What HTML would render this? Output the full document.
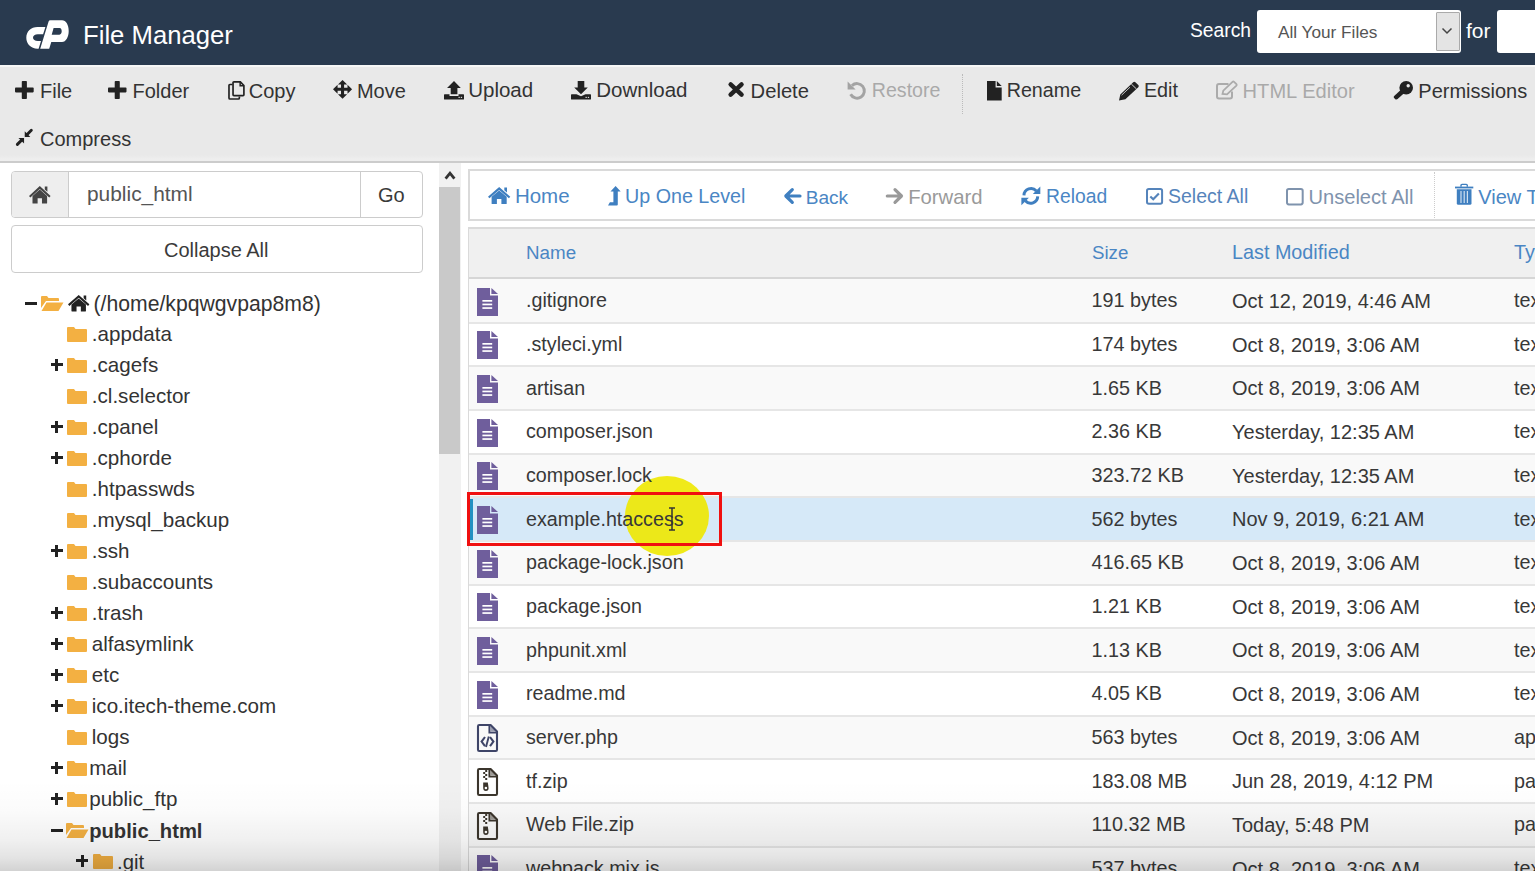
<!DOCTYPE html><html><head><meta charset="utf-8"><title>File Manager</title><style>
*{margin:0;padding:0;box-sizing:border-box}
html,body{width:1535px;height:871px;overflow:hidden;background:#fff;font-family:"Liberation Sans",sans-serif}
.t{position:absolute;white-space:nowrap;line-height:1}
.a{position:absolute}
svg{position:absolute;overflow:visible}
</style></head><body>
<div class="a" style="left:0;top:0;width:1535px;height:65px;background:#293a4f"></div>
<div class="a" style="left:0;top:65px;width:1535px;height:2px;background:#f6f6f6"></div>
<svg style="left:20px;top:14px" width="56" height="42" viewBox="20 14 56 42"><path d="M45.4 27 L37.5 27 C31 27 26.3 31.5 26.3 37.8 C26.3 44 31 48.7 37.5 48.7 L38.6 48.7 L41.0 41 L37.8 41 C35 41 33 39.6 33 37.7 C33 35.8 35 34.3 37.8 34.3 L43.1 34.3 Z" fill="#fff"/><path fill-rule="evenodd" d="M40.2 48.7 L48.6 21.6 Q49 20.3 50.3 20.3 L62 20.3 C66 20.3 68.7 25 68.7 31 C68.7 37 66 42 62 42 L51.3 42 L49.2 48.7 Z M53.6 28 L59.6 28 C61.1 28 61.7 29.6 61.7 31.3 C61.7 33 60.9 34.7 59.4 34.7 L51.7 34.7 Z" fill="#fff"/></svg>
<div class="t" style="left:83.0px;top:23.04px;font-size:25.7px;color:#fff;font-weight:normal;">File Manager</div>
<div class="t" style="left:1190.0px;top:21.26px;font-size:19.3px;color:#fff;font-weight:normal;">Search</div>
<div class="a" style="left:1257px;top:10px;width:204px;height:43px;background:#fff;border-radius:3px;"></div>
<div class="a" style="left:1435.5px;top:11.5px;width:24px;height:39.5px;background:#e4e4e4;border:1px solid #aaa;border-radius:1px"></div>
<svg style="left:1441px;top:27px" width="12" height="8" viewBox="0 0 12 8"><path d="M1.5 1.5 L6 6 L10.5 1.5" stroke="#444" stroke-width="1.5" fill="none"/></svg>
<div class="t" style="left:1278.0px;top:23.94px;font-size:17.2px;color:#555;font-weight:normal;">All Your Files</div>
<div class="t" style="left:1466.0px;top:19.82px;font-size:21px;color:#fff;font-weight:normal;">for</div>
<div class="a" style="left:1497px;top:10px;width:60px;height:43px;background:#fff;border-radius:3px;"></div>
<div class="a" style="left:0;top:67px;width:1535px;height:94px;background:linear-gradient(to bottom,#e9e9e9 0,#e9e9e9 88px,#eeeeee 92px)"></div>
<div class="a" style="left:0;top:161px;width:1535px;height:2px;background:#cccccc"></div>
<div class="t" style="left:40.0px;top:80.67px;font-size:20px;color:#333;font-weight:normal;">File</div>
<div class="t" style="left:132.5px;top:80.67px;font-size:20px;color:#333;font-weight:normal;">Folder</div>
<div class="t" style="left:248.8px;top:80.67px;font-size:20px;color:#333;font-weight:normal;">Copy</div>
<div class="t" style="left:356.9px;top:80.67px;font-size:20px;color:#333;font-weight:normal;">Move</div>
<div class="t" style="left:468.2px;top:80.24px;font-size:20.5px;color:#333;font-weight:normal;">Upload</div>
<div class="t" style="left:596.3px;top:80.24px;font-size:20.5px;color:#333;font-weight:normal;">Download</div>
<div class="t" style="left:750.6px;top:80.50px;font-size:20.2px;color:#333;font-weight:normal;">Delete</div>
<div class="t" style="left:871.8px;top:81.00px;font-size:19.6px;color:#a9a9a9;font-weight:normal;">Restore</div>
<div class="t" style="left:1006.7px;top:80.92px;font-size:19.7px;color:#333;font-weight:normal;">Rename</div>
<div class="t" style="left:1143.9px;top:80.84px;font-size:19.8px;color:#333;font-weight:normal;">Edit</div>
<div class="t" style="left:1242.6px;top:80.58px;font-size:20.1px;color:#a9a9a9;font-weight:normal;">HTML Editor</div>
<div class="t" style="left:1418.3px;top:80.67px;font-size:20px;color:#333;font-weight:normal;">Permissions</div>
<div class="t" style="left:40.0px;top:128.77px;font-size:20px;color:#333;font-weight:normal;">Compress</div>
<svg style="left:15.00px;top:81.00px" width="18.70" height="18.00" viewBox="0 0 19 18" preserveAspectRatio="none"><rect x="0" y="6.6" width="19" height="4.8" rx="0.8" fill="#222"/><rect x="6.9" y="0" width="5.2" height="18" rx="0.8" fill="#222"/></svg>
<svg style="left:107.50px;top:81.00px" width="18.50" height="18.00" viewBox="0 0 19 18" preserveAspectRatio="none"><rect x="0" y="6.6" width="19" height="4.8" rx="0.8" fill="#222"/><rect x="6.9" y="0" width="5.2" height="18" rx="0.8" fill="#222"/></svg>
<svg style="left:227.80px;top:81.00px" width="16.80" height="19.00" viewBox="0 0 17 19" preserveAspectRatio="none"><path d="M4.5 3.5 H2 Q1 3.5 1 4.5 V17 Q1 18 2 18 H10.5 Q11.5 18 11.5 17 V15.5" stroke="#222" stroke-width="1.7" fill="none"/><path d="M6 0.9 H12.5 L16.1 4.5 V13.8 Q16.1 14.7 15.2 14.7 H6 Q5.1 14.7 5.1 13.8 V1.8 Q5.1 0.9 6 0.9 Z" stroke="#222" stroke-width="1.7" fill="none"/><path d="M12.3 1 V4.7 H16" stroke="#222" stroke-width="1.5" fill="none"/></svg>
<svg style="left:332.70px;top:80.00px" width="19.10" height="18.70" viewBox="0 0 20 20" preserveAspectRatio="none"><path d="M10 0 L14.8 4.8 H11.6 V8.4 H15.2 V5.2 L20 10 L15.2 14.8 V11.6 H11.6 V15.2 H14.8 L10 20 L5.2 15.2 H8.4 V11.6 H4.8 V14.8 L0 10 L4.8 5.2 V8.4 H8.4 V4.8 H5.2 Z" fill="#222"/></svg>
<svg style="left:444.00px;top:81.00px" width="20.00" height="18.80" viewBox="0 0 20 19" preserveAspectRatio="none"><path d="M10 0 L16.8 7.2 H13.4 V13.3 H6.7 V7.2 H3 Z" fill="#222"/><path d="M0 14 Q0 13.3 0.7 13.3 H5.5 V15.2 H14.5 V13.3 H19.3 Q20 13.3 20 14 V18.2 Q20 18.8 19.3 18.8 H0.7 Q0 18.8 0 18.2 Z" fill="#222"/><rect x="14.5" y="16" width="1.3" height="1.1" fill="#e9e9e9"/><rect x="16.8" y="16" width="1.3" height="1.1" fill="#e9e9e9"/></svg>
<svg style="left:571.40px;top:81.00px" width="20.00" height="18.80" viewBox="0 0 20 19" preserveAspectRatio="none"><path d="M6.7 0 H13.3 V6.6 H16.8 L10 13.3 L3.2 6.6 H6.7 Z" fill="#222"/><path d="M0 14 Q0 13.3 0.7 13.3 H5.5 L10 15.5 L14.5 13.3 H19.3 Q20 13.3 20 14 V18.2 Q20 18.8 19.3 18.8 H0.7 Q0 18.8 0 18.2 Z" fill="#222"/><rect x="14.5" y="16" width="1.3" height="1.1" fill="#e9e9e9"/><rect x="16.8" y="16" width="1.3" height="1.1" fill="#e9e9e9"/></svg>
<svg style="left:728.30px;top:82.30px" width="16.20" height="15.10" viewBox="0 0 16 15" preserveAspectRatio="none"><path d="M2.6 2.4 L13.4 12.6 M13.4 2.4 L2.6 12.6" stroke="#222" stroke-width="4.4" stroke-linecap="round"/></svg>
<svg style="left:846.70px;top:80.70px" width="19.30" height="18.80" viewBox="0 0 19.3 18.8" preserveAspectRatio="none"><path d="M5 4.6 A7.3 7.3 0 1 1 3.6 13.3" stroke="#a3a3a3" stroke-width="2.9" fill="none"/><path d="M0.6 0.6 L0.6 8.6 L8.6 8.6 Z" fill="#a3a3a3"/></svg>
<svg style="left:987.30px;top:80.80px" width="14.70" height="19.40" viewBox="0 0 14.7 19.4" preserveAspectRatio="none"><path d="M0 0 H8.6 V6.4 H14.7 V19.4 H0 Z" fill="#222"/><path d="M9.8 0 L14.7 5 H9.8 Z" fill="#222"/></svg>
<svg style="left:1119.20px;top:80.80px" width="20.50" height="19.40" viewBox="0 0 20.5 19.4" preserveAspectRatio="none"><path d="M0 19.4 L1.3 13.6 L14.2 1.2 Q15.3 0.1 16.4 1.2 L19.3 4 Q20.4 5.1 19.3 6.2 L6.4 18.3 Z" fill="#222"/><path d="M12.3 3 L17.5 8" stroke="#e9e9e9" stroke-width="0.9"/><path d="M2.6 14.2 L11 6.2" stroke="#e9e9e9" stroke-width="0.8"/></svg>
<svg style="left:1215.70px;top:81.00px" width="22.30" height="18.60" viewBox="0 0 22.3 18.6" preserveAspectRatio="none"><path d="M12.5 3 H3 Q1 3 1 5 V15.6 Q1 17.6 3 17.6 H14 Q16 17.6 16 15.6 V10.5" stroke="#ababab" stroke-width="2" fill="none"/><path d="M6.5 13 L7.3 9.6 L16.5 0.9 Q17.3 0.2 18.1 0.9 L20.4 3.1 Q21.1 3.9 20.4 4.6 L11 13.3 Z" stroke="#ababab" stroke-width="1.8" fill="none"/></svg>
<svg style="left:1392.80px;top:81.00px" width="20.00" height="18.60" viewBox="0 0 20 18.6" preserveAspectRatio="none"><circle cx="13.2" cy="6.8" r="6.8" fill="#222"/><circle cx="15.2" cy="4.8" r="1.7" fill="#e9e9e9"/><path d="M8.2 8.4 L11.6 11.8 L4.6 18.1 Q3.7 18.9 2.6 18.4 L0.9 16.7 Q0.4 15.7 1.2 14.9 Z" fill="#222"/></svg>
<svg style="left:16.20px;top:128.60px" width="16.70" height="16.80" viewBox="0 0 17 17" preserveAspectRatio="none"><path d="M15.6 1.3 L10.6 6.3" stroke="#222" stroke-width="3" stroke-linecap="round"/><path d="M1.4 15.6 L6.4 10.6" stroke="#222" stroke-width="3" stroke-linecap="round"/><path d="M8.9 2.3 V8 H14.6 Z" fill="#222"/><path d="M8.2 9 H2.5 L8.2 14.7 Z" fill="#222"/></svg>
<div class="a" style="left:962px;top:74px;width:0;height:40px;border-left:1px dotted #bbb"></div>
<div class="a" style="left:11px;top:171px;width:412px;height:47px;border:1px solid #ccc;border-radius:4px;background:#fff"></div>
<div class="a" style="left:12px;top:172px;width:57px;height:45px;background:#eee;border-right:1px solid #ccc;border-radius:3px 0 0 3px"></div>
<div class="a" style="left:360px;top:172px;width:1px;height:45px;background:#ccc"></div>
<div class="t" style="left:87.0px;top:184.30px;font-size:20.9px;color:#555;font-weight:normal;">public_html</div>
<svg style="left:29.40px;top:185.50px" width="21.60" height="17.50" viewBox="0 0 22.3 17.1" preserveAspectRatio="none"><path d="M11.15 0 L22.3 9.7 L20.9 11.3 L11.15 2.9 L1.4 11.3 L0 9.7 Z" fill="#444"/><path d="M16.3 0.6 H19 V5.6 L16.3 3.3 Z" fill="#444"/><path d="M3.6 9.8 L11.15 3.5 L18.7 9.8 V16.6 Q18.7 17.1 18.2 17.1 H13.4 V12 H8.9 V17.1 H4.1 Q3.6 17.1 3.6 16.6 Z" fill="#444"/></svg>
<div class="t" style="left:378.0px;top:185.07px;font-size:20px;color:#3a3a3a;font-weight:normal;">Go</div>
<div class="a" style="left:11px;top:225px;width:412px;height:48px;border:1px solid #ccc;border-radius:4px;background:#fff"></div>
<div class="t" style="left:164.0px;top:240.47px;font-size:20px;color:#3a3a3a;font-weight:normal;">Collapse All</div>
<div class="a" style="left:25px;top:301.5px;width:12px;height:3px;background:#222"></div>
<svg style="left:41px;top:296px" width="23" height="15" viewBox="0 0 23 15"><path d="M0 1 Q0 0 1 0 H6 L7.5 2 H17 Q18 2 18 3 V5 H5 L0 12 Z" fill="#f3b042"/><path d="M5.5 6.5 H22.5 L17.5 15 H0.5 Z" fill="#f3b042"/></svg>
<svg style="left:67.50px;top:295.20px" width="21.40" height="16.50" viewBox="0 0 22.3 17.1" preserveAspectRatio="none"><path d="M11.15 0 L22.3 9.7 L20.9 11.3 L11.15 2.9 L1.4 11.3 L0 9.7 Z" fill="#222"/><path d="M16.3 0.6 H19 V5.6 L16.3 3.3 Z" fill="#222"/><path d="M3.6 9.8 L11.15 3.5 L18.7 9.8 V16.6 Q18.7 17.1 18.2 17.1 H13.4 V12 H8.9 V17.1 H4.1 Q3.6 17.1 3.6 16.6 Z" fill="#222"/></svg>
<div class="t" style="left:93.5px;top:292.95px;font-size:21.2px;color:#333;font-weight:normal;">(/home/kpqwgvpap8m8)</div>
<svg style="left:67px;top:327px" width="20" height="15" viewBox="0 0 20 15"><path d="M0 1 Q0 0 1 0 H7 L8.5 2 H19 Q20 2 20 3 V14 Q20 15 19 15 H1 Q0 15 0 14 Z" fill="#f3b042"/></svg>
<div class="t" style="left:91.8px;top:324.46px;font-size:20.6px;color:#333;font-weight:normal;">.appdata</div>
<div class="a" style="left:50.5px;top:363.0px;width:12px;height:3px;background:#222"></div><div class="a" style="left:55.0px;top:358.5px;width:3px;height:12px;background:#222"></div>
<svg style="left:67px;top:358px" width="20" height="15" viewBox="0 0 20 15"><path d="M0 1 Q0 0 1 0 H7 L8.5 2 H19 Q20 2 20 3 V14 Q20 15 19 15 H1 Q0 15 0 14 Z" fill="#f3b042"/></svg>
<div class="t" style="left:91.8px;top:355.46px;font-size:20.6px;color:#333;font-weight:normal;">.cagefs</div>
<svg style="left:67px;top:389px" width="20" height="15" viewBox="0 0 20 15"><path d="M0 1 Q0 0 1 0 H7 L8.5 2 H19 Q20 2 20 3 V14 Q20 15 19 15 H1 Q0 15 0 14 Z" fill="#f3b042"/></svg>
<div class="t" style="left:91.8px;top:386.46px;font-size:20.6px;color:#333;font-weight:normal;">.cl.selector</div>
<div class="a" style="left:50.5px;top:425.0px;width:12px;height:3px;background:#222"></div><div class="a" style="left:55.0px;top:420.5px;width:3px;height:12px;background:#222"></div>
<svg style="left:67px;top:420px" width="20" height="15" viewBox="0 0 20 15"><path d="M0 1 Q0 0 1 0 H7 L8.5 2 H19 Q20 2 20 3 V14 Q20 15 19 15 H1 Q0 15 0 14 Z" fill="#f3b042"/></svg>
<div class="t" style="left:91.8px;top:417.46px;font-size:20.6px;color:#333;font-weight:normal;">.cpanel</div>
<div class="a" style="left:50.5px;top:456.0px;width:12px;height:3px;background:#222"></div><div class="a" style="left:55.0px;top:451.5px;width:3px;height:12px;background:#222"></div>
<svg style="left:67px;top:451px" width="20" height="15" viewBox="0 0 20 15"><path d="M0 1 Q0 0 1 0 H7 L8.5 2 H19 Q20 2 20 3 V14 Q20 15 19 15 H1 Q0 15 0 14 Z" fill="#f3b042"/></svg>
<div class="t" style="left:91.8px;top:448.46px;font-size:20.6px;color:#333;font-weight:normal;">.cphorde</div>
<svg style="left:67px;top:482px" width="20" height="15" viewBox="0 0 20 15"><path d="M0 1 Q0 0 1 0 H7 L8.5 2 H19 Q20 2 20 3 V14 Q20 15 19 15 H1 Q0 15 0 14 Z" fill="#f3b042"/></svg>
<div class="t" style="left:91.8px;top:479.46px;font-size:20.6px;color:#333;font-weight:normal;">.htpasswds</div>
<svg style="left:67px;top:513px" width="20" height="15" viewBox="0 0 20 15"><path d="M0 1 Q0 0 1 0 H7 L8.5 2 H19 Q20 2 20 3 V14 Q20 15 19 15 H1 Q0 15 0 14 Z" fill="#f3b042"/></svg>
<div class="t" style="left:91.8px;top:510.46px;font-size:20.6px;color:#333;font-weight:normal;">.mysql_backup</div>
<div class="a" style="left:50.5px;top:549.0px;width:12px;height:3px;background:#222"></div><div class="a" style="left:55.0px;top:544.5px;width:3px;height:12px;background:#222"></div>
<svg style="left:67px;top:544px" width="20" height="15" viewBox="0 0 20 15"><path d="M0 1 Q0 0 1 0 H7 L8.5 2 H19 Q20 2 20 3 V14 Q20 15 19 15 H1 Q0 15 0 14 Z" fill="#f3b042"/></svg>
<div class="t" style="left:91.8px;top:541.46px;font-size:20.6px;color:#333;font-weight:normal;">.ssh</div>
<svg style="left:67px;top:575px" width="20" height="15" viewBox="0 0 20 15"><path d="M0 1 Q0 0 1 0 H7 L8.5 2 H19 Q20 2 20 3 V14 Q20 15 19 15 H1 Q0 15 0 14 Z" fill="#f3b042"/></svg>
<div class="t" style="left:91.8px;top:572.46px;font-size:20.6px;color:#333;font-weight:normal;">.subaccounts</div>
<div class="a" style="left:50.5px;top:611.0px;width:12px;height:3px;background:#222"></div><div class="a" style="left:55.0px;top:606.5px;width:3px;height:12px;background:#222"></div>
<svg style="left:67px;top:606px" width="20" height="15" viewBox="0 0 20 15"><path d="M0 1 Q0 0 1 0 H7 L8.5 2 H19 Q20 2 20 3 V14 Q20 15 19 15 H1 Q0 15 0 14 Z" fill="#f3b042"/></svg>
<div class="t" style="left:91.8px;top:603.46px;font-size:20.6px;color:#333;font-weight:normal;">.trash</div>
<div class="a" style="left:50.5px;top:642.0px;width:12px;height:3px;background:#222"></div><div class="a" style="left:55.0px;top:637.5px;width:3px;height:12px;background:#222"></div>
<svg style="left:67px;top:637px" width="20" height="15" viewBox="0 0 20 15"><path d="M0 1 Q0 0 1 0 H7 L8.5 2 H19 Q20 2 20 3 V14 Q20 15 19 15 H1 Q0 15 0 14 Z" fill="#f3b042"/></svg>
<div class="t" style="left:91.8px;top:634.46px;font-size:20.6px;color:#333;font-weight:normal;">alfasymlink</div>
<div class="a" style="left:50.5px;top:673.0px;width:12px;height:3px;background:#222"></div><div class="a" style="left:55.0px;top:668.5px;width:3px;height:12px;background:#222"></div>
<svg style="left:67px;top:668px" width="20" height="15" viewBox="0 0 20 15"><path d="M0 1 Q0 0 1 0 H7 L8.5 2 H19 Q20 2 20 3 V14 Q20 15 19 15 H1 Q0 15 0 14 Z" fill="#f3b042"/></svg>
<div class="t" style="left:91.8px;top:665.46px;font-size:20.6px;color:#333;font-weight:normal;">etc</div>
<div class="a" style="left:50.5px;top:704.0px;width:12px;height:3px;background:#222"></div><div class="a" style="left:55.0px;top:699.5px;width:3px;height:12px;background:#222"></div>
<svg style="left:67px;top:699px" width="20" height="15" viewBox="0 0 20 15"><path d="M0 1 Q0 0 1 0 H7 L8.5 2 H19 Q20 2 20 3 V14 Q20 15 19 15 H1 Q0 15 0 14 Z" fill="#f3b042"/></svg>
<div class="t" style="left:91.8px;top:696.46px;font-size:20.6px;color:#333;font-weight:normal;">ico.itech-theme.com</div>
<svg style="left:67px;top:730px" width="20" height="15" viewBox="0 0 20 15"><path d="M0 1 Q0 0 1 0 H7 L8.5 2 H19 Q20 2 20 3 V14 Q20 15 19 15 H1 Q0 15 0 14 Z" fill="#f3b042"/></svg>
<div class="t" style="left:91.8px;top:727.46px;font-size:20.6px;color:#333;font-weight:normal;">logs</div>
<div class="a" style="left:50.5px;top:766.0px;width:12px;height:3px;background:#222"></div><div class="a" style="left:55.0px;top:761.5px;width:3px;height:12px;background:#222"></div>
<svg style="left:67px;top:761px" width="20" height="15" viewBox="0 0 20 15"><path d="M0 1 Q0 0 1 0 H7 L8.5 2 H19 Q20 2 20 3 V14 Q20 15 19 15 H1 Q0 15 0 14 Z" fill="#f3b042"/></svg>
<div class="t" style="left:89.2px;top:758.46px;font-size:20.6px;color:#333;font-weight:normal;">mail</div>
<div class="a" style="left:50.5px;top:797.0px;width:12px;height:3px;background:#222"></div><div class="a" style="left:55.0px;top:792.5px;width:3px;height:12px;background:#222"></div>
<svg style="left:67px;top:792px" width="20" height="15" viewBox="0 0 20 15"><path d="M0 1 Q0 0 1 0 H7 L8.5 2 H19 Q20 2 20 3 V14 Q20 15 19 15 H1 Q0 15 0 14 Z" fill="#f3b042"/></svg>
<div class="t" style="left:89.2px;top:789.46px;font-size:20.6px;color:#333;font-weight:normal;">public_ftp</div>
<div class="a" style="left:50.5px;top:828.5px;width:12px;height:3px;background:#222"></div>
<svg style="left:66px;top:823px" width="23" height="15" viewBox="0 0 23 15"><path d="M0 1 Q0 0 1 0 H6 L7.5 2 H17 Q18 2 18 3 V5 H5 L0 12 Z" fill="#f3b042"/><path d="M5.5 6.5 H22.5 L17.5 15 H0.5 Z" fill="#f3b042"/></svg>
<div class="t" style="left:89.2px;top:820.80px;font-size:20.2px;color:#333;font-weight:bold;">public_html</div>
<div class="a" style="left:76px;top:859.0px;width:12px;height:3px;background:#222"></div><div class="a" style="left:80.5px;top:854.5px;width:3px;height:12px;background:#222"></div>
<svg style="left:92.5px;top:854px" width="20" height="15" viewBox="0 0 20 15"><path d="M0 1 Q0 0 1 0 H7 L8.5 2 H19 Q20 2 20 3 V14 Q20 15 19 15 H1 Q0 15 0 14 Z" fill="#f3b042"/></svg>
<div class="t" style="left:117.0px;top:851.71px;font-size:20.3px;color:#333;font-weight:normal;">.git</div>
<div class="a" style="left:439px;top:163px;width:22px;height:708px;background:#f1f1f1"></div>
<svg style="left:444px;top:170px" width="12" height="10" viewBox="0 0 12 10"><path d="M1.6 8.6 L6 3.2 L10.4 8.6" stroke="#333" stroke-width="2.8" fill="none"/></svg>
<div class="a" style="left:439px;top:187px;width:21px;height:267px;background:#c9c9c9"></div>
<div class="a" style="left:468px;top:169px;width:1100px;height:52px;border:2px solid #dadada;background:#fff"></div>
<div class="t" style="left:514.9px;top:186.44px;font-size:20.5px;color:#4a86c4;font-weight:normal;">Home</div>
<div class="t" style="left:625.0px;top:187.12px;font-size:19.7px;color:#4a86c4;font-weight:normal;">Up One Level</div>
<div class="t" style="left:805.7px;top:187.63px;font-size:19.1px;color:#4a86c4;font-weight:normal;">Back</div>
<div class="t" style="left:908.2px;top:186.61px;font-size:20.3px;color:#9a9a9a;font-weight:normal;">Forward</div>
<div class="t" style="left:1046.0px;top:187.46px;font-size:19.3px;color:#4a86c4;font-weight:normal;">Reload</div>
<div class="t" style="left:1168.0px;top:187.29px;font-size:19.5px;color:#5584bb;font-weight:normal;">Select All</div>
<div class="t" style="left:1308.5px;top:186.78px;font-size:20.1px;color:#7f93ad;font-weight:normal;">Unselect All</div>
<div class="t" style="left:1478.3px;top:186.87px;font-size:20px;color:#4a86c4;font-weight:normal;">View Trash</div>
<div class="a" style="left:1434px;top:172px;width:0;height:46px;border-left:1px dotted #ccc"></div>
<svg style="left:488.00px;top:187.30px" width="22.30" height="17.10" viewBox="0 0 22.3 17.1" preserveAspectRatio="none"><path d="M11.15 0 L22.3 9.7 L20.9 11.3 L11.15 2.9 L1.4 11.3 L0 9.7 Z" fill="#3f7fc0"/><path d="M16.3 0.6 H19 V5.6 L16.3 3.3 Z" fill="#3f7fc0"/><path d="M3.6 9.8 L11.15 3.5 L18.7 9.8 V16.6 Q18.7 17.1 18.2 17.1 H13.4 V12 H8.9 V17.1 H4.1 Q3.6 17.1 3.6 16.6 Z" fill="#3f7fc0"/></svg>
<svg style="left:607.60px;top:186.40px" width="12.70" height="19.50" viewBox="0 0 12.7 19.5" preserveAspectRatio="none"><path d="M7.6 0 L12.7 5.6 H9.8 V18.5 Q9.8 19.5 8.8 19.5 H0 L1.9 16.3 H5.4 V5.6 H2.5 Z" fill="#3f7fc0"/></svg>
<svg style="left:783.70px;top:188.20px" width="17.30" height="16.00" viewBox="0 0 17.3 16" preserveAspectRatio="none"><path d="M8.3 1.6 L1.8 8 L8.3 14.4 M2.2 8 H16" stroke="#3f7fc0" stroke-width="3.2" stroke-linecap="round" stroke-linejoin="round" fill="none"/></svg>
<svg style="left:886.30px;top:188.20px" width="17.30" height="16.00" viewBox="0 0 17.3 16" preserveAspectRatio="none"><path d="M9 1.6 L15.5 8 L9 14.4 M15.1 8 H1.3" stroke="#999" stroke-width="3.2" stroke-linecap="round" stroke-linejoin="round" fill="none"/></svg>
<svg style="left:1021.30px;top:186.30px" width="19.70" height="19.80" viewBox="0 0 20 20" preserveAspectRatio="none"><path d="M3 9.5 A7.2 7.2 0 0 1 15.6 5" stroke="#3f7fc0" stroke-width="3" fill="none"/><path d="M19.6 0.6 V8.2 H12 Z" fill="#3f7fc0"/><path d="M17 10.5 A7.2 7.2 0 0 1 4.4 15" stroke="#3f7fc0" stroke-width="3" fill="none"/><path d="M0.4 19.4 V11.8 H8 Z" fill="#3f7fc0"/></svg>
<svg style="left:1145.90px;top:187.80px" width="17.10" height="16.70" viewBox="0 0 17 17" preserveAspectRatio="none"><rect x="1" y="1" width="15" height="15" rx="1.8" stroke="#5584bb" stroke-width="2" fill="none"/><path d="M4.3 8.6 L7.2 11.4 L12.8 5.6" stroke="#5584bb" stroke-width="2.1" fill="none"/></svg>
<svg style="left:1286.30px;top:187.50px" width="17.70" height="17.40" viewBox="0 0 17.7 17.4" preserveAspectRatio="none"><rect x="1" y="1" width="15.7" height="15.4" rx="1.8" stroke="#7f93ad" stroke-width="2" fill="none"/></svg>
<svg style="left:1455.20px;top:184.10px" width="18.30" height="20.80" viewBox="0 0 18.3 20.8" preserveAspectRatio="none"><rect x="0" y="2.6" width="18.3" height="1.8" fill="#3f7fc0"/><path d="M6 2.8 V1.4 Q6 0.4 7 0.4 H11.3 Q12.3 0.4 12.3 1.4 V2.8" stroke="#3f7fc0" stroke-width="1.4" fill="none"/><path d="M1.8 5.2 H16.5 V19.3 Q16.5 20.8 15 20.8 H3.3 Q1.8 20.8 1.8 19.3 Z" fill="#3f7fc0"/><rect x="5.4" y="7" width="1.2" height="12" fill="#cfe0f0"/><rect x="8.6" y="7" width="1.2" height="12" fill="#cfe0f0"/><rect x="11.8" y="7" width="1.2" height="12" fill="#cfe0f0"/></svg>
<div class="a" style="left:468px;top:227px;width:1100px;height:660px;border:2px solid #dadada;background:#fff"></div>
<div class="a" style="left:469px;top:229px;width:1100px;height:48px;background:#f0f0f0"></div>
<div class="a" style="left:469px;top:277px;width:1100px;height:2px;background:#d6d6d6"></div>
<div class="t" style="left:526.0px;top:243.88px;font-size:18.8px;color:#4a86c4;font-weight:normal;">Name</div>
<div class="t" style="left:1092.0px;top:243.97px;font-size:18.7px;color:#4a86c4;font-weight:normal;">Size</div>
<div class="t" style="left:1232.0px;top:243.04px;font-size:19.8px;color:#4a86c4;font-weight:normal;">Last Modified</div>
<div class="t" style="left:1514.0px;top:243.04px;font-size:19.8px;color:#4a86c4;font-weight:normal;">Type</div>
<div class="a" style="left:469px;top:279.00px;width:1100px;height:43.67px;background:#f9f9f9"></div>
<div class="a" style="left:469px;top:322.67px;width:1100px;height:43.67px;background:#ffffff"></div>
<div class="a" style="left:469px;top:366.34px;width:1100px;height:43.67px;background:#f9f9f9"></div>
<div class="a" style="left:469px;top:410.01px;width:1100px;height:43.67px;background:#ffffff"></div>
<div class="a" style="left:469px;top:453.68px;width:1100px;height:43.67px;background:#f9f9f9"></div>
<div class="a" style="left:469px;top:497.35px;width:1100px;height:43.67px;background:#d6e9f8"></div>
<div class="a" style="left:469px;top:541.02px;width:1100px;height:43.67px;background:#f9f9f9"></div>
<div class="a" style="left:469px;top:584.69px;width:1100px;height:43.67px;background:#ffffff"></div>
<div class="a" style="left:469px;top:628.36px;width:1100px;height:43.67px;background:#f9f9f9"></div>
<div class="a" style="left:469px;top:672.03px;width:1100px;height:43.67px;background:#ffffff"></div>
<div class="a" style="left:469px;top:715.70px;width:1100px;height:43.67px;background:#f9f9f9"></div>
<div class="a" style="left:469px;top:759.37px;width:1100px;height:43.67px;background:#ffffff"></div>
<div class="a" style="left:469px;top:803.04px;width:1100px;height:43.67px;background:#f9f9f9"></div>
<div class="a" style="left:469px;top:846.71px;width:1100px;height:43.67px;background:#ffffff"></div>
<div class="a" style="left:469px;top:321.67px;width:1100px;height:2px;background:#e6e6e6"></div>
<div class="a" style="left:469px;top:365.34px;width:1100px;height:2px;background:#e6e6e6"></div>
<div class="a" style="left:469px;top:409.01px;width:1100px;height:2px;background:#e6e6e6"></div>
<div class="a" style="left:469px;top:452.68px;width:1100px;height:2px;background:#e6e6e6"></div>
<div class="a" style="left:469px;top:496.35px;width:1100px;height:2px;background:#e6e6e6"></div>
<div class="a" style="left:469px;top:540.02px;width:1100px;height:2px;background:#e6e6e6"></div>
<div class="a" style="left:469px;top:583.69px;width:1100px;height:2px;background:#e6e6e6"></div>
<div class="a" style="left:469px;top:627.36px;width:1100px;height:2px;background:#e6e6e6"></div>
<div class="a" style="left:469px;top:671.03px;width:1100px;height:2px;background:#e6e6e6"></div>
<div class="a" style="left:469px;top:714.70px;width:1100px;height:2px;background:#e6e6e6"></div>
<div class="a" style="left:469px;top:758.37px;width:1100px;height:2px;background:#e6e6e6"></div>
<div class="a" style="left:469px;top:802.04px;width:1100px;height:2px;background:#e6e6e6"></div>
<div class="a" style="left:469px;top:845.71px;width:1100px;height:2px;background:#e6e6e6"></div>
<div class="a" style="left:469px;top:889.38px;width:1100px;height:2px;background:#e6e6e6"></div>
<div class="a" style="left:469.5px;top:498.85px;width:3px;height:40.67px;background:#2290c2"></div>
<div class="a" style="left:625px;top:476px;width:84px;height:80px;border-radius:50%;background:#eee800;opacity:0.9"></div>
<svg style="left:477px;top:288px" width="21" height="28" viewBox="0 0 21 28"><path d="M0 0 H13 V7.4 H21 V28 H0 Z" fill="#6f5e9c"/><path d="M14.4 0 L21 6.1 H14.4 Z" fill="#6f5e9c"/><rect x="5.4" y="12" width="9.8" height="1.7" fill="#fff"/><rect x="5.4" y="15.6" width="9.8" height="1.7" fill="#fff"/><rect x="5.4" y="19.2" width="9.8" height="1.7" fill="#fff"/></svg>
<div class="t" style="left:526.0px;top:291.32px;font-size:19.7px;color:#383838;font-weight:normal;">.gitignore</div>
<div class="t" style="left:1091.5px;top:291.24px;font-size:19.8px;color:#383838;font-weight:normal;">191 bytes</div>
<div class="t" style="left:1232.0px;top:291.07px;font-size:20px;color:#383838;font-weight:normal;">Oct 12, 2019, 4:46 AM</div>
<div class="t" style="left:1514.0px;top:291.24px;font-size:19.8px;color:#383838;font-weight:normal;">text/x-generic</div>
<svg style="left:477px;top:331px" width="21" height="28" viewBox="0 0 21 28"><path d="M0 0 H13 V7.4 H21 V28 H0 Z" fill="#6f5e9c"/><path d="M14.4 0 L21 6.1 H14.4 Z" fill="#6f5e9c"/><rect x="5.4" y="12" width="9.8" height="1.7" fill="#fff"/><rect x="5.4" y="15.6" width="9.8" height="1.7" fill="#fff"/><rect x="5.4" y="19.2" width="9.8" height="1.7" fill="#fff"/></svg>
<div class="t" style="left:526.0px;top:334.99px;font-size:19.7px;color:#383838;font-weight:normal;">.styleci.yml</div>
<div class="t" style="left:1091.5px;top:334.91px;font-size:19.8px;color:#383838;font-weight:normal;">174 bytes</div>
<div class="t" style="left:1232.0px;top:334.74px;font-size:20px;color:#383838;font-weight:normal;">Oct 8, 2019, 3:06 AM</div>
<div class="t" style="left:1514.0px;top:334.91px;font-size:19.8px;color:#383838;font-weight:normal;">text/x-generic</div>
<svg style="left:477px;top:375px" width="21" height="28" viewBox="0 0 21 28"><path d="M0 0 H13 V7.4 H21 V28 H0 Z" fill="#6f5e9c"/><path d="M14.4 0 L21 6.1 H14.4 Z" fill="#6f5e9c"/><rect x="5.4" y="12" width="9.8" height="1.7" fill="#fff"/><rect x="5.4" y="15.6" width="9.8" height="1.7" fill="#fff"/><rect x="5.4" y="19.2" width="9.8" height="1.7" fill="#fff"/></svg>
<div class="t" style="left:526.0px;top:378.66px;font-size:19.7px;color:#383838;font-weight:normal;">artisan</div>
<div class="t" style="left:1091.5px;top:378.58px;font-size:19.8px;color:#383838;font-weight:normal;">1.65 KB</div>
<div class="t" style="left:1232.0px;top:378.41px;font-size:20px;color:#383838;font-weight:normal;">Oct 8, 2019, 3:06 AM</div>
<div class="t" style="left:1514.0px;top:378.58px;font-size:19.8px;color:#383838;font-weight:normal;">text/x-generic</div>
<svg style="left:477px;top:419px" width="21" height="28" viewBox="0 0 21 28"><path d="M0 0 H13 V7.4 H21 V28 H0 Z" fill="#6f5e9c"/><path d="M14.4 0 L21 6.1 H14.4 Z" fill="#6f5e9c"/><rect x="5.4" y="12" width="9.8" height="1.7" fill="#fff"/><rect x="5.4" y="15.6" width="9.8" height="1.7" fill="#fff"/><rect x="5.4" y="19.2" width="9.8" height="1.7" fill="#fff"/></svg>
<div class="t" style="left:526.0px;top:422.33px;font-size:19.7px;color:#383838;font-weight:normal;">composer.json</div>
<div class="t" style="left:1091.5px;top:422.25px;font-size:19.8px;color:#383838;font-weight:normal;">2.36 KB</div>
<div class="t" style="left:1232.0px;top:422.08px;font-size:20px;color:#383838;font-weight:normal;">Yesterday, 12:35 AM</div>
<div class="t" style="left:1514.0px;top:422.25px;font-size:19.8px;color:#383838;font-weight:normal;">text/x-generic</div>
<svg style="left:477px;top:462px" width="21" height="28" viewBox="0 0 21 28"><path d="M0 0 H13 V7.4 H21 V28 H0 Z" fill="#6f5e9c"/><path d="M14.4 0 L21 6.1 H14.4 Z" fill="#6f5e9c"/><rect x="5.4" y="12" width="9.8" height="1.7" fill="#fff"/><rect x="5.4" y="15.6" width="9.8" height="1.7" fill="#fff"/><rect x="5.4" y="19.2" width="9.8" height="1.7" fill="#fff"/></svg>
<div class="t" style="left:526.0px;top:466.00px;font-size:19.7px;color:#383838;font-weight:normal;">composer.lock</div>
<div class="t" style="left:1091.5px;top:465.92px;font-size:19.8px;color:#383838;font-weight:normal;">323.72 KB</div>
<div class="t" style="left:1232.0px;top:465.75px;font-size:20px;color:#383838;font-weight:normal;">Yesterday, 12:35 AM</div>
<div class="t" style="left:1514.0px;top:465.92px;font-size:19.8px;color:#383838;font-weight:normal;">text/x-generic</div>
<svg style="left:477px;top:506px" width="21" height="28" viewBox="0 0 21 28"><path d="M0 0 H13 V7.4 H21 V28 H0 Z" fill="#6f5e9c"/><path d="M14.4 0 L21 6.1 H14.4 Z" fill="#6f5e9c"/><rect x="5.4" y="12" width="9.8" height="1.7" fill="#fff"/><rect x="5.4" y="15.6" width="9.8" height="1.7" fill="#fff"/><rect x="5.4" y="19.2" width="9.8" height="1.7" fill="#fff"/></svg>
<div class="t" style="left:526.0px;top:509.67px;font-size:19.7px;color:#383838;font-weight:normal;">example.htaccess</div>
<div class="t" style="left:1091.5px;top:509.59px;font-size:19.8px;color:#383838;font-weight:normal;">562 bytes</div>
<div class="t" style="left:1232.0px;top:509.42px;font-size:20px;color:#383838;font-weight:normal;">Nov 9, 2019, 6:21 AM</div>
<div class="t" style="left:1514.0px;top:509.59px;font-size:19.8px;color:#383838;font-weight:normal;">text/x-generic</div>
<svg style="left:477px;top:550px" width="21" height="28" viewBox="0 0 21 28"><path d="M0 0 H13 V7.4 H21 V28 H0 Z" fill="#6f5e9c"/><path d="M14.4 0 L21 6.1 H14.4 Z" fill="#6f5e9c"/><rect x="5.4" y="12" width="9.8" height="1.7" fill="#fff"/><rect x="5.4" y="15.6" width="9.8" height="1.7" fill="#fff"/><rect x="5.4" y="19.2" width="9.8" height="1.7" fill="#fff"/></svg>
<div class="t" style="left:526.0px;top:553.34px;font-size:19.7px;color:#383838;font-weight:normal;">package-lock.json</div>
<div class="t" style="left:1091.5px;top:553.26px;font-size:19.8px;color:#383838;font-weight:normal;">416.65 KB</div>
<div class="t" style="left:1232.0px;top:553.09px;font-size:20px;color:#383838;font-weight:normal;">Oct 8, 2019, 3:06 AM</div>
<div class="t" style="left:1514.0px;top:553.26px;font-size:19.8px;color:#383838;font-weight:normal;">text/x-generic</div>
<svg style="left:477px;top:593px" width="21" height="28" viewBox="0 0 21 28"><path d="M0 0 H13 V7.4 H21 V28 H0 Z" fill="#6f5e9c"/><path d="M14.4 0 L21 6.1 H14.4 Z" fill="#6f5e9c"/><rect x="5.4" y="12" width="9.8" height="1.7" fill="#fff"/><rect x="5.4" y="15.6" width="9.8" height="1.7" fill="#fff"/><rect x="5.4" y="19.2" width="9.8" height="1.7" fill="#fff"/></svg>
<div class="t" style="left:526.0px;top:597.01px;font-size:19.7px;color:#383838;font-weight:normal;">package.json</div>
<div class="t" style="left:1091.5px;top:596.93px;font-size:19.8px;color:#383838;font-weight:normal;">1.21 KB</div>
<div class="t" style="left:1232.0px;top:596.76px;font-size:20px;color:#383838;font-weight:normal;">Oct 8, 2019, 3:06 AM</div>
<div class="t" style="left:1514.0px;top:596.93px;font-size:19.8px;color:#383838;font-weight:normal;">text/x-generic</div>
<svg style="left:477px;top:637px" width="21" height="28" viewBox="0 0 21 28"><path d="M0 0 H13 V7.4 H21 V28 H0 Z" fill="#6f5e9c"/><path d="M14.4 0 L21 6.1 H14.4 Z" fill="#6f5e9c"/><rect x="5.4" y="12" width="9.8" height="1.7" fill="#fff"/><rect x="5.4" y="15.6" width="9.8" height="1.7" fill="#fff"/><rect x="5.4" y="19.2" width="9.8" height="1.7" fill="#fff"/></svg>
<div class="t" style="left:526.0px;top:640.68px;font-size:19.7px;color:#383838;font-weight:normal;">phpunit.xml</div>
<div class="t" style="left:1091.5px;top:640.60px;font-size:19.8px;color:#383838;font-weight:normal;">1.13 KB</div>
<div class="t" style="left:1232.0px;top:640.43px;font-size:20px;color:#383838;font-weight:normal;">Oct 8, 2019, 3:06 AM</div>
<div class="t" style="left:1514.0px;top:640.60px;font-size:19.8px;color:#383838;font-weight:normal;">text/x-generic</div>
<svg style="left:477px;top:681px" width="21" height="28" viewBox="0 0 21 28"><path d="M0 0 H13 V7.4 H21 V28 H0 Z" fill="#6f5e9c"/><path d="M14.4 0 L21 6.1 H14.4 Z" fill="#6f5e9c"/><rect x="5.4" y="12" width="9.8" height="1.7" fill="#fff"/><rect x="5.4" y="15.6" width="9.8" height="1.7" fill="#fff"/><rect x="5.4" y="19.2" width="9.8" height="1.7" fill="#fff"/></svg>
<div class="t" style="left:526.0px;top:684.35px;font-size:19.7px;color:#383838;font-weight:normal;">readme.md</div>
<div class="t" style="left:1091.5px;top:684.27px;font-size:19.8px;color:#383838;font-weight:normal;">4.05 KB</div>
<div class="t" style="left:1232.0px;top:684.10px;font-size:20px;color:#383838;font-weight:normal;">Oct 8, 2019, 3:06 AM</div>
<div class="t" style="left:1514.0px;top:684.27px;font-size:19.8px;color:#383838;font-weight:normal;">text/x-generic</div>
<svg style="left:477px;top:724px" width="21" height="28" viewBox="0 0 21 28"><path d="M2.2 1 H13.6 L20 7.4 V25.8 Q20 27 18.8 27 H2.2 Q1 27 1 25.8 V2.2 Q1 1 2.2 1 Z" stroke="#3f4568" stroke-width="2.1" fill="none" stroke-linejoin="round"/><path d="M12.4 1.2 V8.6 H19.8" stroke="#3f4568" stroke-width="1.9" fill="none"/><path d="M13.5 1.5 L19.5 7.5 H13.5 Z" fill="#3f4568" opacity="0.5"/><path d="M8 13 L4.6 17.6 L8 22.2 M13 13 L16.4 17.6 L13 22.2" stroke="#3f4568" stroke-width="2.1" fill="none"/><path d="M11.8 12.5 L9 23" stroke="#3f4568" stroke-width="1.9"/></svg>
<div class="t" style="left:526.0px;top:728.02px;font-size:19.7px;color:#383838;font-weight:normal;">server.php</div>
<div class="t" style="left:1091.5px;top:727.94px;font-size:19.8px;color:#383838;font-weight:normal;">563 bytes</div>
<div class="t" style="left:1232.0px;top:727.77px;font-size:20px;color:#383838;font-weight:normal;">Oct 8, 2019, 3:06 AM</div>
<div class="t" style="left:1514.0px;top:727.94px;font-size:19.8px;color:#383838;font-weight:normal;">application/x-php</div>
<svg style="left:477px;top:768px" width="21" height="28" viewBox="0 0 21 28"><path d="M2.2 1 H13.6 L20 7.4 V25.8 Q20 27 18.8 27 H2.2 Q1 27 1 25.8 V2.2 Q1 1 2.2 1 Z" stroke="#3b352c" stroke-width="2.1" fill="none" stroke-linejoin="round"/><path d="M12.4 1.2 V8.6 H19.8" stroke="#3b352c" stroke-width="1.9" fill="none"/><path d="M13.5 1.5 L19.5 7.5 H13.5 Z" fill="#3b352c" opacity="0.5"/><rect x="8.2" y="2" width="2" height="2" fill="#3b352c"/><rect x="6.2" y="4" width="2" height="2" fill="#3b352c"/><rect x="8.2" y="6" width="2" height="2" fill="#3b352c"/><rect x="6.2" y="8" width="2" height="2" fill="#3b352c"/><rect x="8.2" y="10" width="2" height="2" fill="#3b352c"/><path d="M6.2 14.5 H10.8 L11.6 20 Q11.6 23 8.9 23 Q6.2 23 6.2 20 Z" fill="#3b352c"/><circle cx="8.9" cy="20" r="1.3" fill="#fff"/></svg>
<div class="t" style="left:526.0px;top:771.69px;font-size:19.7px;color:#383838;font-weight:normal;">tf.zip</div>
<div class="t" style="left:1091.5px;top:771.61px;font-size:19.8px;color:#383838;font-weight:normal;">183.08 MB</div>
<div class="t" style="left:1232.0px;top:771.44px;font-size:20px;color:#383838;font-weight:normal;">Jun 28, 2019, 4:12 PM</div>
<div class="t" style="left:1514.0px;top:771.61px;font-size:19.8px;color:#383838;font-weight:normal;">package/x-generic</div>
<svg style="left:477px;top:812px" width="21" height="28" viewBox="0 0 21 28"><path d="M2.2 1 H13.6 L20 7.4 V25.8 Q20 27 18.8 27 H2.2 Q1 27 1 25.8 V2.2 Q1 1 2.2 1 Z" stroke="#3b352c" stroke-width="2.1" fill="none" stroke-linejoin="round"/><path d="M12.4 1.2 V8.6 H19.8" stroke="#3b352c" stroke-width="1.9" fill="none"/><path d="M13.5 1.5 L19.5 7.5 H13.5 Z" fill="#3b352c" opacity="0.5"/><rect x="8.2" y="2" width="2" height="2" fill="#3b352c"/><rect x="6.2" y="4" width="2" height="2" fill="#3b352c"/><rect x="8.2" y="6" width="2" height="2" fill="#3b352c"/><rect x="6.2" y="8" width="2" height="2" fill="#3b352c"/><rect x="8.2" y="10" width="2" height="2" fill="#3b352c"/><path d="M6.2 14.5 H10.8 L11.6 20 Q11.6 23 8.9 23 Q6.2 23 6.2 20 Z" fill="#3b352c"/><circle cx="8.9" cy="20" r="1.3" fill="#fff"/></svg>
<div class="t" style="left:526.0px;top:815.36px;font-size:19.7px;color:#383838;font-weight:normal;">Web File.zip</div>
<div class="t" style="left:1091.5px;top:815.28px;font-size:19.8px;color:#383838;font-weight:normal;">110.32 MB</div>
<div class="t" style="left:1232.0px;top:815.11px;font-size:20px;color:#383838;font-weight:normal;">Today, 5:48 PM</div>
<div class="t" style="left:1514.0px;top:815.28px;font-size:19.8px;color:#383838;font-weight:normal;">package/x-generic</div>
<svg style="left:477px;top:855px" width="21" height="28" viewBox="0 0 21 28"><path d="M0 0 H13 V7.4 H21 V28 H0 Z" fill="#6f5e9c"/><path d="M14.4 0 L21 6.1 H14.4 Z" fill="#6f5e9c"/><rect x="5.4" y="12" width="9.8" height="1.7" fill="#fff"/><rect x="5.4" y="15.6" width="9.8" height="1.7" fill="#fff"/><rect x="5.4" y="19.2" width="9.8" height="1.7" fill="#fff"/></svg>
<div class="t" style="left:526.0px;top:859.03px;font-size:19.7px;color:#383838;font-weight:normal;">webpack.mix.js</div>
<div class="t" style="left:1091.5px;top:858.95px;font-size:19.8px;color:#383838;font-weight:normal;">537 bytes</div>
<div class="t" style="left:1232.0px;top:858.78px;font-size:20px;color:#383838;font-weight:normal;">Oct 8, 2019, 3:06 AM</div>
<div class="t" style="left:1514.0px;top:858.95px;font-size:19.8px;color:#383838;font-weight:normal;">text/x-generic</div>
<div class="a" style="left:467px;top:492px;width:255px;height:54px;border:3px solid #f01010;"></div>
<svg style="left:667px;top:507px" width="10" height="24" viewBox="0 0 10 24"><path d="M2 1 H8 M5 1 V23 M2 23 H8" stroke="#333" stroke-width="1.5" fill="none"/></svg>
<div class="a" style="left:0;top:780px;width:1535px;height:91px;background:linear-gradient(to bottom, rgba(0,0,0,0) 0px, rgba(0,0,0,0.015) 30px, rgba(0,0,0,0.06) 60px, rgba(0,0,0,0.11) 78px, rgba(0,0,0,0.175) 91px);pointer-events:none"></div>
</body></html>
